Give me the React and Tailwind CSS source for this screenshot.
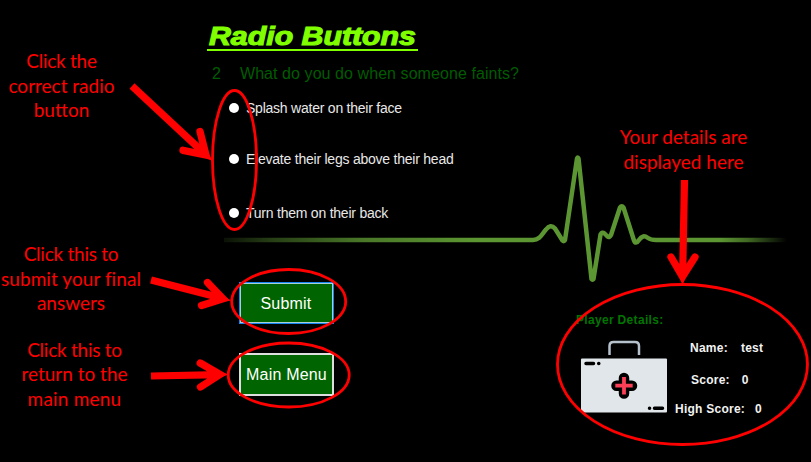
const Note = ({ lines, className }) => (
  <div className={`flex flex-col items-center whitespace-nowrap font-[Lato,sans-serif] text-[19px] leading-[24.5px] text-[#ff0000] ${className}`}>
    {lines.map(([text, tracking]) => (
      <span key={text} className={tracking}>{text}</span>
    ))}
  </div>
);

const Option = ({ children, className }) => (
  <label className={`flex h-5 items-center gap-[7px] text-[14px] tracking-[-0.23px] whitespace-nowrap text-[#e8e8e8] ${className}`}>
    <span className="size-[10px] rounded-full bg-white" />
    <span>{children}</span>
  </label>
);

const Heartbeat = () => (
  <svg className="absolute inset-0" width="811" height="462" fill="none">
    <defs>
      <linearGradient id="pulse" gradientUnits="userSpaceOnUse" x1="222" y1="0" x2="787" y2="0">
        <stop offset="0" stopColor="#5c9632" stopOpacity="0.1" />
        <stop offset="0.09" stopColor="#5c9632" stopOpacity="0.42" />
        <stop offset="0.25" stopColor="#5c9632" stopOpacity="0.8" />
        <stop offset="0.45" stopColor="#5c9632" />
        <stop offset="0.88" stopColor="#5c9632" />
        <stop offset="0.93" stopColor="#5c9632" stopOpacity="0.7" />
        <stop offset="1" stopColor="#5c9632" stopOpacity="0" />
      </linearGradient>
    </defs>
    <path
      d="M224 240H533C540 240 542 234 546 229.500C549 225.500 552 225 555 228.500L562.500 240.500Q564 242 565 240L577 158.500Q577.800 156.500 578.500 158.500L591.500 279Q592.500 280.500 593.500 279L600.500 234.500Q602 231.500 604.500 233.500L607.500 236.500Q609.500 238 611 235L620 207.500Q621.700 205 623.500 207.500L634 240.500C635 243.500 637 243 638.500 240.500C642 235.500 644.500 235.500 648 238C650.500 239.800 653 240 656 240H787"
      stroke="url(#pulse)"
      strokeWidth="4.500"
      strokeLinejoin="round"
    />
  </svg>
);

const Callouts = () => (
  <svg className="pointer-events-none absolute inset-0" width="811" height="462" fill="none" stroke="#ff0000">
    <g strokeWidth="2.800">
      <ellipse cx="234.500" cy="160" rx="22" ry="69.500" />
      <ellipse cx="288.700" cy="301.500" rx="57" ry="32" />
      <ellipse cx="288.700" cy="375" rx="60.500" ry="32" />
      <ellipse cx="682.500" cy="364.500" rx="125" ry="80" />
    </g>
    <g strokeWidth="7.200">
      <path d="M132 86L205 154" />
      <path d="M151 280L223 298.400" />
      <path d="M151 376L220 374.700" />
      <path d="M684.500 180L682.600 277" />
    </g>
    <g fill="#ff0000" stroke="none">
      <path d="M202.500 141L212.500 161L192 152Z" />
      <path d="M212.500 289L231 300.500L209 303.500Z" />
      <path d="M207 367L228 374.500L207 383Z" />
      <path d="M675.500 264L682.500 285L691 264Z" />
    </g>
    <g strokeWidth="7.300" strokeLinecap="round" strokeLinejoin="miter">
      <path d="M200 131.500L206 155L183 150.300" />
      <path d="M207.500 282.500L223 298.700L201.500 305.500" />
      <path d="M200.200 363L220 374.500L200.500 387" />
      <path d="M671 257L682.500 276.700L695 257" />
    </g>
  </svg>
);

const FirstAidKit = () => (
  <svg className="block" width="88" height="75" viewBox="580 340 88 75" fill="none">
    <path d="M609.500 355V346Q609.500 342 613.500 342H635Q639 342 639 346V355" stroke="#b4c0cc" strokeWidth="2.500" />
    <rect x="581" y="358.500" width="86" height="54" rx="1" fill="#e0e6e9" />
    <g stroke="#000" strokeLinecap="round">
      <path d="M586 363.500H593.500M598.700 363.500H598.800M649.500 408.200H649.600M654.500 408.200H662.500" strokeWidth="3.500" />
      <path d="M624 378V393.500M616.500 385.700H632" strokeWidth="10.500" />
    </g>
    <path d="M624 377V394.500M615.300 385.700H632.700" stroke="#fb3f57" strokeWidth="3.800" />
  </svg>
);

export default function App() {
  return (
    <main className="relative flex h-[462px] w-[811px] overflow-hidden bg-black font-['Liberation_Sans',Arial,sans-serif]">
      <Heartbeat />
      <aside className="relative flex w-[142px] flex-col items-start">
        <Note className="mt-[49px] w-[123px]" lines={[["Click the", "tracking-[-0.25px]"], ["correct radio", "tracking-normal"], ["button", "tracking-normal"]]} />
        <Note className="mt-[119.500px] w-[142px]" lines={[["Click this to", "tracking-[-0.25px]"], ["submit your final", "tracking-[0.06px]"], ["answers", "tracking-normal"]]} />
        <Note className="mt-[22px] w-[149px]" lines={[["Click this to", "tracking-[-0.25px]"], ["return to the", "tracking-normal"], ["main menu", "tracking-[0.2px]"]]} />
      </aside>
      <section className="relative flex w-[400px] flex-col items-start pl-[65px]">
        <h1 className="mt-[21px] h-[30px] w-[211px] text-[#80ff00]">
          <span className="ml-[2px] block h-[28px] origin-left scale-x-[1.165] text-[26px] leading-[30px] font-bold whitespace-nowrap italic [-webkit-text-stroke:1.1px_#80ff00]">
            Radio Buttons
          </span>
          <span className="block h-[1.500px] bg-[#80ff00]" />
        </h1>
        <div className="mt-[13px] flex h-5 gap-[19px] pl-[5px] text-[16px] leading-5 tracking-[0.070px] whitespace-nowrap text-[#005c00]">
          <span>2</span>
          <span>What do you do when someone faints?</span>
        </div>
        <Option className="mt-[14px] ml-[22px]">Splash water on their face</Option>
        <Option className="mt-[31px] ml-[22px]">Elevate their legs above their head</Option>
        <Option className="mt-[34px] ml-[22px]">Turn them on their back</Option>
        <button className="mt-[59px] ml-[32px] h-[42px] w-[95px] border border-[#1585ef] bg-[#a8cfd8] p-[1px] text-[16px] text-white">
          <span className="flex size-full items-center justify-center bg-[#006400] pt-px pr-px tracking-[0.2px]">Submit</span>
        </button>
        <button className="mt-[29px] ml-[32px] h-[43px] w-[95px] border-2 border-[#dedede] bg-[#006400] text-[16px] tracking-[0.2px] whitespace-nowrap text-white">
          Main Menu
        </button>
      </section>
      <section className="relative flex flex-1 flex-col">
        <Note className="mt-[125px] ml-[34px] w-[215px]" lines={[["Your details are", "tracking-normal"], ["displayed here", "tracking-normal"]]} />
        <h2 className="mt-[138px] ml-[34px] text-[12px] leading-4 font-bold tracking-[0.32px] text-[#007600]">Player Details:</h2>
        <div className="mt-[12px] ml-[38px] flex text-[12px] leading-4 font-bold tracking-[0.250px] whitespace-nowrap text-[#f2f2f2]">
          <FirstAidKit />
          <dl className="flex flex-col pl-[7px]">
            <div className="flex gap-[13px] pl-[15px]"><dt>Name:</dt><dd>test</dd></div>
            <div className="mt-[16px] flex gap-[12px] pl-[16px]"><dt>Score:</dt><dd>0</dd></div>
            <div className="mt-[13px] flex gap-[10px]"><dt>High Score:</dt><dd>0</dd></div>
          </dl>
        </div>
      </section>
      <Callouts />
    </main>
  );
}
